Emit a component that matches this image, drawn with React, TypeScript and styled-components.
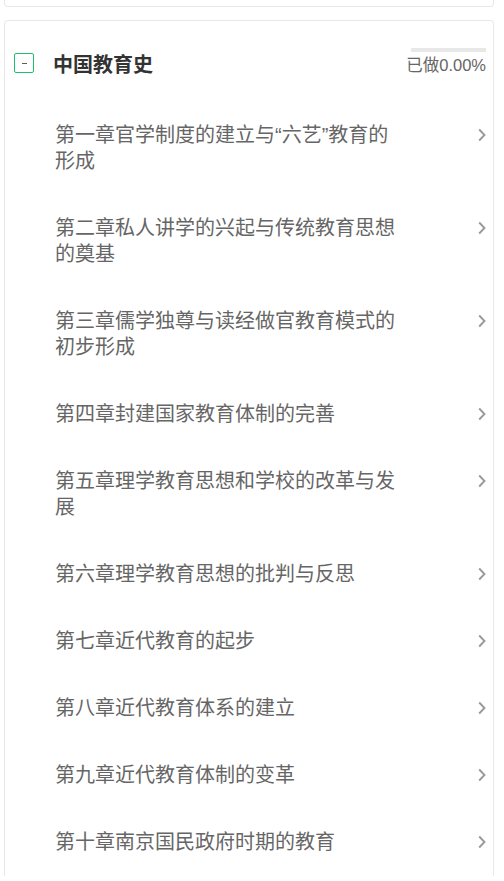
import React from 'react';
import styled, { createGlobalStyle } from 'styled-components';

const GlobalStyle = createGlobalStyle`
  html, body {
    margin: 0;
    padding: 0;
    background: #fff;
    font-family: "Liberation Sans", "Noto Sans CJK SC", sans-serif;
  }
`;

const chapters = [
  '第一章官学制度的建立与“六艺”教育的形成',
  '第二章私人讲学的兴起与传统教育思想的奠基',
  '第三章儒学独尊与读经做官教育模式的初步形成',
  '第四章封建国家教育体制的完善',
  '第五章理学教育思想和学校的改革与发展',
  '第六章理学教育思想的批判与反思',
  '第七章近代教育的起步',
  '第八章近代教育体系的建立',
  '第九章近代教育体制的变革',
  '第十章南京国民政府时期的教育',
];

const App = () => {
  return (
    <Page>
      <GlobalStyle />
      <PrevCard />
      <Card>
        <Header>
          <Toggle>
            <span />
          </Toggle>
          <Title>中国教育史</Title>
          <Progress>
            <Track />
            <Done>已做0.00%</Done>
          </Progress>
        </Header>
        <List>
          {chapters.map((c) => (
            <Row key={c}>
              <RowText>{c}</RowText>
              <Chevron viewBox="0 0 8 14" width="8" height="14">
                <path d="M1.2 1.5 L6.5 7 L1.2 12.5" fill="none" stroke="#999" strokeWidth="1.9" />
              </Chevron>
            </Row>
          ))}
        </List>
      </Card>
    </Page>
  );
};

export default App;

const Page = styled.div`
  width: 504px;
  padding: 0 10px 0 4px;
  box-sizing: border-box;
  display: flex;
  flex-direction: column;
  gap: 13px;
`;

const PrevCard = styled.div`
  height: 7px;
  margin-top: -1px;
  border: 1px solid #e8e8e8;
  border-top: none;
  border-radius: 0 0 4px 4px;
`;

const Card = styled.div`
  border: 1px solid #e8e8e8;
  border-bottom: none;
  border-radius: 4px 4px 0 0;
`;

const Header = styled.div`
  display: flex;
  align-items: center;
  padding: 28px 7px 25px 9px;
  height: 28px;
`;

const Toggle = styled.div`
  width: 18px;
  height: 18px;
  border: 1px solid #1cc16f;
  border-radius: 2px;
  display: flex;
  align-items: center;
  justify-content: center;
  flex-shrink: 0;
  span {
    display: block;
    width: 5px;
    height: 1px;
    background: #6a5a3a;
  }
`;

const Title = styled.div`
  margin-left: 19px;
  font-size: 20px;
  font-weight: 700;
  color: #333;
  flex: 1;
`;

const Progress = styled.div`
  display: flex;
  flex-direction: column;
  align-items: flex-end;
  gap: 3px;
  margin-top: -4px;
`;

const Track = styled.div`
  width: 75px;
  height: 4px;
  background: #e8e8e8;
`;

const Done = styled.div`
  font-size: 16.5px;
  line-height: 20px;
  color: #666;
`;

const List = styled.div`
  display: flex;
  flex-direction: column;
`;

const Row = styled.div`
  display: flex;
  align-items: flex-start;
  padding: 20px 7px 21px 50px;
`;

const RowText = styled.div`
  width: 345px;
  font-size: 20px;
  line-height: 26px;
  color: #666;
  flex-shrink: 0;
`;

const Chevron = styled.svg`
  margin-left: auto;
  margin-top: 6px;
`;
